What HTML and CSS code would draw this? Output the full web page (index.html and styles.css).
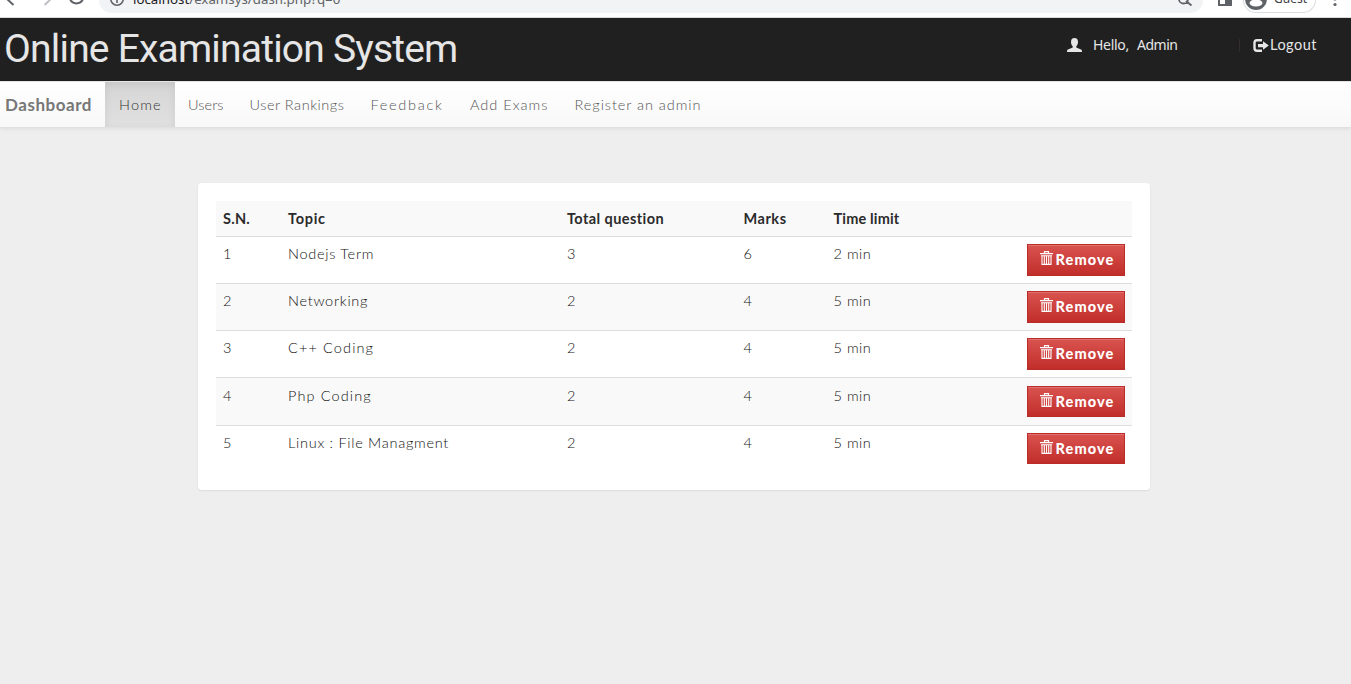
FILE: index.html
```html
<!DOCTYPE html>
<html lang="en">
<head>
<meta charset="utf-8">
<title>Online Examination System</title>
<link rel="stylesheet" href="styles.css">
</head>
<body>
<svg class="defs" width="0" height="0">
  <symbol id="trash" viewBox="0 0 13 14"><path d="M4.500 2V.6h4V2" fill="none" stroke="#fff" stroke-width="1.200"/><path d="M0 2h13v1.300H0zM1 4.300h11v1H1z" fill="#fff"/><path d="M2 5v8.400h9V5M4.300 5v8M6.500 5v8M8.700 5v8" fill="none" stroke="#fff" stroke-width="1.100"/></symbol>
</svg>
<div class="chrome">
  <svg class="arrows" width="90" height="17" viewBox="0 0 90 17"><g fill="none" stroke="#5f6368" stroke-width="2"><path d="M6-2L13.500 5"/><path d="M52-2L44.500 5" stroke="#bdc1c6"/><path d="M70-1A7 7 0 0 0 83-1"/></g></svg>
  <div class="omnibox">
    <svg width="14" height="17" viewBox="0 0 14 17"><circle cx="7" cy="-1" r="6.200" fill="none" stroke="#5f6368" stroke-width="1.600"/><path d="M7-3V3" stroke="#5f6368" stroke-width="1.600"/></svg>
    <span class="url"><b>localhost</b>/examsys/dash.php?q=0</span>
    <svg class="lens" width="16" height="17" viewBox="0 0 16 17"><path d="M1-1A4.500 4.500 0 0 0 10-1M8 1l5.500 4.500" fill="none" stroke="#5f6368" stroke-width="1.800"/></svg>
  </div>
  <svg class="panel" width="14" height="17" viewBox="0 0 14 17"><path d="M0-5h14V6H0z" fill="#5f6368"/><path d="M2-4h5v8H2z" fill="#fff"/></svg>
  <div class="guest"><svg width="22" height="17" viewBox="0 0 22 17"><circle cx="11" cy="-1" r="11" fill="#5f6368"/><ellipse cx="11" cy="3" rx="6.500" ry="3.500" fill="#fff"/><path d="M6-1h10" stroke="#5f6368" stroke-width="2"/></svg><span class="guest-name">Guest</span></div>
  <svg class="dots" width="4" height="17" viewBox="0 0 4 17" fill="#5f6368"><circle cx="2" cy="-1" r="1.600"/><circle cx="2" cy="4.500" r="1.600"/></svg>
</div>
<header class="top">
  <h1 class="title">Online Examination System</h1>
  <div class="account">
    <svg width="15" height="14" viewBox="0 0 15 14" fill="#e6e6e6"><path d="M7.500 0C9.900 0 11 1.500 11 4c0 2-.7 3.300-1.700 4.300v1.200l4.700 2c.8.400 1 1 1 2.500H0c0-1.500.2-2.100 1-2.500l4.700-2V8.300C4.700 7.300 4 6 4 4 4 1.500 5.100 0 7.500 0z"/></svg>
    <span class="hello">Hello,</span><span class="admin">Admin</span>
    <span class="sep"></span>
    <svg class="out" width="16" height="13" viewBox="0 0 16 13"><path d="M9 1.200H4Q1.500 1.200 1.500 4v5Q1.500 11.800 4 11.800H9" fill="none" stroke="#e6e6e6" stroke-width="2.400"/><path d="M5 5h5V2.300L15.800 6.500 10 10.700V8.200H5z" fill="#e6e6e6"/></svg>
    <span class="logout">Logout</span>
  </div>
</header>
<nav class="nav">
  <a class="brand">Dashboard</a>
  <a class="item on home">Home</a>
  <a class="item users">Users</a>
  <a class="item rank">User Rankings</a>
  <a class="item feed">Feedback</a>
  <a class="item add">Add Exams</a>
  <a class="item reg">Register an admin</a>
</nav>
<main class="card">
<table class="exams">
<colgroup><col class="c1"><col class="c2"><col class="c3"><col class="c4"><col class="c5"><col class="c6"></colgroup>
<tr class="head"><th class="ls2">S.N.</th><th class="ls7">Topic</th><th class="ls4">Total question</th><th class="ls5">Marks</th><th class="ls1">Time limit</th><th></th></tr>
<tr><td>1</td><td class="ls7">Nodejs Term</td><td>3</td><td>6</td><td class="ls5">2 min</td><td><a class="remove"><svg width="13" height="14"><use href="#trash"/></svg><b>Remove</b></a></td></tr>
<tr><td>2</td><td class="ls7">Networking</td><td>2</td><td>4</td><td class="ls5">5 min</td><td><a class="remove"><svg width="13" height="14"><use href="#trash"/></svg><b>Remove</b></a></td></tr>
<tr><td>3</td><td class="ls11">C++ Coding</td><td>2</td><td>4</td><td class="ls5">5 min</td><td><a class="remove"><svg width="13" height="14"><use href="#trash"/></svg><b>Remove</b></a></td></tr>
<tr class="tall"><td>4</td><td class="ls11">Php Coding</td><td>2</td><td>4</td><td class="ls5">5 min</td><td><a class="remove"><svg width="13" height="14"><use href="#trash"/></svg><b>Remove</b></a></td></tr>
<tr class="last"><td>5</td><td class="ls7">Linux : File Managment</td><td>2</td><td>4</td><td class="ls5">5 min</td><td><a class="remove"><svg width="13" height="14"><use href="#trash"/></svg><b>Remove</b></a></td></tr>
</table>
</main>
</body>
</html>
```
FILE: styles.css
```css
* { box-sizing: border-box; }
body { margin: 0; height: 684px; overflow: hidden; background: #eee; color: #111; font: 300 14.5px/18px Lato, sans-serif; font-variant-ligatures: none; }
.defs { display: block; }
.chrome { display: flex; height: 18px; background: #fff; border-bottom: 1px solid #dadada; overflow: hidden; }
.arrows { margin-right: 9px; }
.omnibox { display: flex; width: 1104px; height: 13px; padding-left: 11px; background: #f1f3f4; border-radius: 0 0 13px 13px; overflow: hidden; }
.url { margin: -10px 0 0 9px; color: #5f6368; font: 13.3px/18px "Noto Sans", sans-serif; }
.url b { color: #202124; font-weight: 400; }
.lens { margin: 0 9px 0 auto; }
.panel { margin-left: 15px; }
.guest { display: flex; width: 73px; height: 13px; margin-left: 11px; border: 1px solid #dadce0; border-top: 0; border-radius: 0 0 13px 13px; }
.guest svg { margin-left: 1px; }
.guest-name { margin: -9px 0 0 7px; color: #3c4043; font: 12px/16px "Noto Sans", sans-serif; }
.dots { margin-left: 17px; }
.top { display: flex; justify-content: space-between; height: 63px; background: #202020; color: #e6e6e6; }
.title { margin: 0 0 0 4px; font: 400 39px/62px Roboto, sans-serif; letter-spacing: -.8px; white-space: nowrap; }
.account { display: flex; width: 250px; height: 18px; margin: 18px 34px 0 0; align-items: center; white-space: nowrap; }
.hello { width: 44px; margin-left: 11px; }
.admin { width: 40px; }
.hello, .admin { font: 14px/18px "Noto Sans", sans-serif; letter-spacing: -.3px; }
.admin { letter-spacing: -.5px; }
.sep { width: 1px; height: 13px; margin: 0 13px 0 62px; background: #332c2c; }
.out { margin-right: 1px; }
.logout { font-weight: 400; letter-spacing: .5px; }
.nav { display: flex; height: 47px; background: linear-gradient(#fff, #f8f8f8); border-top: 1px solid #e4e4e4; border-bottom: 1px solid #e0e0e0; box-shadow: 0 1px 4px rgba(0,0,0,.07); color: #555; line-height: 45px; white-space: nowrap; }
.brand { width: 105px; padding-left: 5px; color: #777; font-size: 17px; font-weight: 700; letter-spacing: .53px; }
.item { padding-left: 13px; }
.on { background: linear-gradient(#d6d6d6, #e0e0e0); box-shadow: inset 0 3px 8px rgba(0,0,0,.08); color: #333; }
.home { width: 70px; padding-left: 14px; letter-spacing: 1.2px; }
.users { width: 61.500px; letter-spacing: .1px; }
.rank { width: 121px; letter-spacing: .54px; }
.feed { width: 99.500px; letter-spacing: 1.7px; }
.add { width: 104.500px; letter-spacing: 1.02px; }
.reg { letter-spacing: .95px; }
.card { width: 952px; height: 307px; margin: 55px 0 0 198px; padding: 18px; background: #fff; border-radius: 4px; box-shadow: 0 1px 2px rgba(0,0,0,.08); }
.exams { width: 916px; table-layout: fixed; border-collapse: separate; border-spacing: 0; }
.c1 { width: 65px; } .c2 { width: 279px; } .c3 { width: 176.500px; } .c4 { width: 90px; } .c5 { width: 193px; } .c6 { width: 112.500px; }
td { height: 47px; padding: 8px 7px 5px; border-top: 1px solid #ddd; vertical-align: top; }
th { height: 35px; padding: 8px 7px; color: #2b2b2b; text-align: left; font-weight: 700; }
.ls1 { letter-spacing: .17px; }
.ls2 { letter-spacing: .25px; }
.ls4 { letter-spacing: .42px; }
.ls5 { letter-spacing: .53px; }
.ls7 { letter-spacing: .72px; }
.ls11 { letter-spacing: 1.12px; }
.tall td { height: 48px; padding-top: 9px; }
.exams tr:nth-child(odd) { background: #f9f9f9; }
.remove { display: flex; width: 98px; height: 32px; margin-top: -1px; padding: 6px 0 0 12px; border: 1px solid #b92c28; background: linear-gradient(#d9534f, #c12e2a); box-shadow: inset 0 1px #e1716e; color: #fff; }
.tall .remove, .last .remove { height: 31px; }
.remove b { font-weight: 900; letter-spacing: 1.1px; }
.remove svg { margin-right: 3px; }
```
